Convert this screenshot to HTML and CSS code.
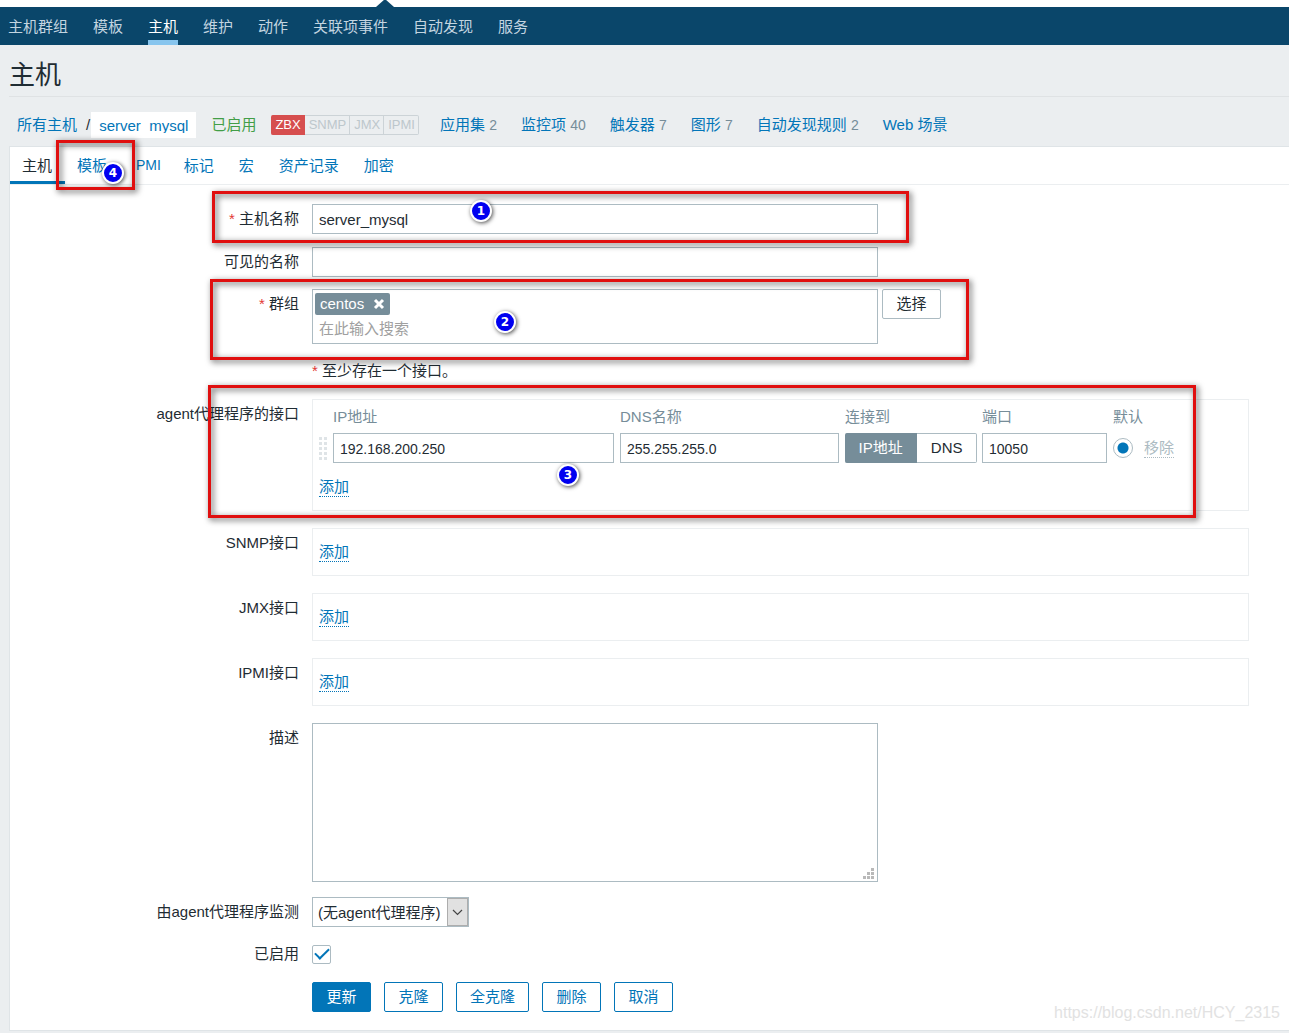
FILE: index.html
```html
<!DOCTYPE html>
<html lang="zh-CN">
<head>
<meta charset="utf-8">
<title>主机</title>
<link rel="stylesheet" href="styles.css">
</head>
<body>
<div class="topstrip"><span class="topstrip-arrow"></span></div>
<nav class="subnav">
  <a href="#">主机群组</a>
  <a href="#">模板</a>
  <a href="#" class="active">主机</a>
  <a href="#">维护</a>
  <a href="#">动作</a>
  <a href="#">关联项事件</a>
  <a href="#">自动发现</a>
  <a href="#">服务</a>
</nav>
<main class="content">
  <h1>主机</h1>
  <div class="crumbs">
    <a href="#" class="all-hosts">所有主机</a>
    <span class="slash">/</span>
    <a href="#" class="crumb-current"><span>server_mysql</span></a>
    <span class="enabled">已启用</span>
    <div class="availability"><span class="on">ZBX</span><span>SNMP</span><span>JMX</span><span>IPMI</span></div>
    <ul class="links">
      <li><a href="#">应用集</a> <span>2</span></li>
      <li><a href="#">监控项</a> <span>40</span></li>
      <li><a href="#">触发器</a> <span>7</span></li>
      <li><a href="#">图形</a> <span>7</span></li>
      <li><a href="#">自动发现规则</a> <span>2</span></li>
      <li><a href="#">Web 场景</a></li>
    </ul>
  </div>
  <section class="panel">
    <div class="tabs">
      <a href="#" class="active">主机</a>
      <a href="#">模板</a>
      <a href="#" class="latin">IPMI</a>
      <a href="#">标记</a>
      <a href="#">宏</a>
      <a href="#">资产记录</a>
      <a href="#">加密</a>
    </div>
    <form class="form">
      <div class="row">
        <label for="host" class="required">主机名称</label>
        <div><input id="host" class="text field" type="text" value="server_mysql"></div>
      </div>
      <div class="row">
        <label for="visible">可见的名称</label>
        <div><input id="visible" class="text field" type="text"></div>
      </div>
      <div class="row">
        <label for="groups" class="required">群组</label>
        <div class="group-line">
          <div class="multiselect field">
            <span class="chip">centos
              <button type="button" aria-label="移除 centos"><svg width="12" height="12" viewBox="0 0 12 12"><path d="M2 2l8 8M10 2l-8 8" stroke="#fff" stroke-width="3" fill="none"/></svg></button>
            </span>
            <input id="groups" type="text" placeholder="在此输入搜索">
          </div>
          <button type="button" class="btn grey">选择</button>
        </div>
      </div>
      <div class="row note">
        <span></span>
        <p class="required">至少存在一个接口。</p>
      </div>
      <div class="row iface">
        <span class="label">agent代理程序的接口</span>
        <div class="box agent">
          <table>
            <thead>
              <tr><th class="c-drag"></th><th class="c-ip">IP地址</th><th class="c-dns">DNS名称</th><th class="c-conn">连接到</th><th class="c-port">端口</th><th class="c-def">默认</th><th></th></tr>
            </thead>
            <tbody>
              <tr>
                <td><svg class="drag" width="8" height="24" viewBox="0 0 8 24" fill="#dfe4e7"><path d="M0 1h3v3H0zM5 1h3v3H5zM0 6h3v3H0zM5 6h3v3H5zM0 11h3v3H0zM5 11h3v3H5zM0 16h3v3H0zM5 16h3v3H5zM0 21h3v3H0zM5 21h3v3H5z"/></svg></td>
                <td><input class="text num" type="text" aria-label="IP地址" value="192.168.200.250"></td>
                <td><input class="text num" type="text" aria-label="DNS名称" value="255.255.255.0"></td>
                <td><div class="segmented"><button type="button" class="on">IP地址</button><button type="button">DNS</button></div></td>
                <td><input class="text num" type="text" aria-label="端口" value="10050"></td>
                <td><input class="radio" type="radio" aria-label="默认" checked></td>
                <td><button type="button" class="link disabled">移除</button></td>
              </tr>
            </tbody>
          </table>
          <button type="button" class="link">添加</button>
        </div>
      </div>
      <div class="row iface">
        <span class="label">SNMP接口</span>
        <div class="box"><button type="button" class="link">添加</button></div>
      </div>
      <div class="row iface">
        <span class="label">JMX接口</span>
        <div class="box"><button type="button" class="link">添加</button></div>
      </div>
      <div class="row iface">
        <span class="label">IPMI接口</span>
        <div class="box"><button type="button" class="link">添加</button></div>
      </div>
      <div class="row desc">
        <label for="desc">描述</label>
        <div class="textarea-wrap field">
          <textarea id="desc"></textarea>
          <svg class="grip" width="11" height="11" viewBox="0 0 11 11" fill="#b9b9b9"><path d="M8 0h3v3H8zM4 4h3v3H4zM8 4h3v3H8zM0 8h3v3H0zM4 8h3v3H4zM8 8h3v3H8z"/></svg>
        </div>
      </div>
      <div class="row">
        <label for="proxy">由agent代理程序监测</label>
        <div>
          <div class="select-wrap">
            <select id="proxy"><option>(无agent代理程序)</option></select>
            <span class="select-arrow"><svg width="11" height="7" viewBox="0 0 11 7"><path d="M1 1l4.500 4.500L10 1" fill="none" stroke="#444" stroke-width="1.200"/></svg></span>
          </div>
        </div>
      </div>
      <div class="row">
        <label for="enabled">已启用</label>
        <div class="check-line"><input id="enabled" class="check" type="checkbox" checked></div>
      </div>
      <div class="row">
        <span></span>
        <div class="actions">
          <button type="submit" class="btn primary">更新</button>
          <button type="button" class="btn">克隆</button>
          <button type="button" class="btn">全克隆</button>
          <button type="button" class="btn">删除</button>
          <button type="button" class="btn">取消</button>
        </div>
      </div>
    </form>
  </section>
</main>
<div class="frame frame-1"></div>
<div class="frame frame-2"></div>
<div class="frame frame-3"></div>
<div class="frame frame-4"></div>
<span class="pin pin-1">1</span>
<span class="pin pin-2">2</span>
<span class="pin pin-3">3</span>
<span class="pin pin-4">4</span>
<span class="watermark">https://blog.csdn.net/HCY_2315</span>
</body>
</html>
```
FILE: styles.css
```css
* { box-sizing: border-box; }

body {
  margin: 0;
  position: relative;
  background: #ebeef0;
  color: #1f2c33;
  font: 15px/20px "Liberation Sans", "Noto Sans CJK SC", sans-serif;
}

a { color: #0275b8; text-decoration: none; }
button, input, select, textarea { font: inherit; color: inherit; margin: 0; }
button { cursor: pointer; white-space: nowrap; }

/* navigation */
.topstrip { height: 7px; background: #fff; position: relative; }
.topstrip-arrow {
  position: absolute;
  left: 376px;
  bottom: 0;
  border: solid transparent;
  border-width: 0 9px 8px;
  border-bottom-color: #0a466a;
}
.subnav {
  display: flex;
  gap: 25px;
  height: 38px;
  padding-left: 8px;
  background: #0a466a;
}
.subnav a { line-height: 40px; height: 38px; color: #c3d5e0; white-space: nowrap; }
.subnav .active { color: #fff; box-shadow: inset 0 -5px #87c5ee; }

/* heading and breadcrumbs */
.content { padding-left: 9px; }
h1 {
  margin: 0;
  height: 52px;
  border-bottom: 1px solid #dfe2e4;
  font-size: 26px;
  font-weight: 400;
  line-height: 60px;
}
.crumbs {
  display: flex;
  align-items: center;
  height: 49px;
  padding: 7px 0 0 8px;
  white-space: nowrap;
}
.slash { margin: 0 1px 0 9px; }
.crumb-current {
  height: 26px;
  padding: 4px 8px 0;
  background: #fff;
}
.crumb-current span { display: block; height: 17px; line-height: 20px; overflow: hidden; }
.enabled { margin: 0 15px; color: #429e47; }
.availability { display: flex; font-size: 13px; line-height: 18px; color: #bdc7cc; }
.availability span { padding: 0 3px 0 4px; border: 1px solid #ccd3d7; border-left-width: 0; }
.availability .on { background: #d64e4e; border-color: #d64e4e; color: #fff; border-radius: 2px 0 0 2px; }
.availability span:last-child { border-radius: 0 2px 2px 0; }
.links { display: flex; gap: 24px; margin: 0; padding: 0 0 0 21px; list-style: none; }
.links span { font-size: 14px; color: #768d99; }

/* panel */
.panel { background: #fff; border: 1px solid #dfe4e7; border-right: 0; }
.tabs { display: flex; height: 38px; border-bottom: 1px solid #ebeef0; }
.tabs a { padding: 0 13px 0 12px; line-height: 37px; white-space: nowrap; }
.tabs .active { color: #1f2c33; box-shadow: inset 0 -3px #0275b8; }
.tabs .latin { padding-right: 11px; font-size: 14px; }

.form { padding: 19px 40px 18px 0; }
.row {
  display: grid;
  grid-template-columns: 289px minmax(0, 1fr);
  column-gap: 13px;
  margin-bottom: 12px;
}
.row:first-child { margin-bottom: 13px; }
.row:last-child { margin: 13px 0 0; }
.row > label, .label { line-height: 30px; text-align: right; }
.required::before { content: "* "; color: #e33734; }
.note { margin: 17px 0 18px; }
.note p { margin: 0; }
.iface { margin-bottom: 17px; }
.desc { margin-bottom: 15px; }

.field { width: 100%; max-width: 566px; }
.text {
  display: block;
  height: 30px;
  padding: 1px 6px 0;
  border: 1px solid #acbbc2;
  background: #fff;
}
.num { width: 100%; font-size: 14px; }

.group-line { display: flex; align-items: flex-start; gap: 4px; }
.multiselect { height: 55px; padding: 3px 2px; border: 1px solid #acbbc2; }
.chip {
  display: flex;
  align-items: center;
  justify-content: space-between;
  width: 75px;
  height: 22px;
  padding: 0 5px;
  border-radius: 2px;
  background: #768d99;
  color: #fff;
}
.chip button { display: flex; padding: 0; border: 0; background: none; }
.multiselect input { display: block; width: 100%; height: 26px; padding: 0 4px; border: 0; outline: 0; }
.multiselect input::placeholder { color: #a0a0a0; opacity: 1; }

.btn {
  min-width: 59px;
  height: 30px;
  padding: 0 13px;
  border: 1px solid #0275b8;
  border-radius: 2px;
  background: #fff;
  color: #0275b8;
  line-height: 28px;
}
.btn.primary { background: #0275b8; color: #fff; }
.btn.grey { border-color: #acbbc2; color: #1f2c33; }

/* interface boxes */
.box { min-height: 48px; padding: 13px 6px 0; border: 1px solid #ebeef0; }
.box.agent { min-height: 112px; padding-top: 7px; }
.link {
  display: block;
  height: 20px;
  padding: 0;
  border: 0;
  border-bottom: 1px dotted #0275b8;
  background: none;
  color: #0275b8;
  line-height: 18px;
}
.link.disabled { color: #acbbc2; border-color: #acbbc2; }
.agent > .link { margin-top: 14px; }
table { width: 100%; max-width: 870px; table-layout: fixed; border-collapse: collapse; }
th { height: 26px; padding: 0 0 6px; text-align: left; font-weight: 400; color: #768d99; }
td { height: 30px; padding: 0 6px 0 0; }
.c-drag { width: 14px; }
.c-ip { width: 287px; }
.c-dns { width: 225px; }
.c-conn { width: 137px; }
.c-port { width: 131px; }
.c-def { width: 31px; }
.drag { display: block; }
td:nth-child(4) { padding-right: 5px; }
.segmented { display: flex; height: 30px; }
.segmented button {
  flex: 1 1 auto;
  padding: 0 13px;
  border: 1px solid #acbbc2;
  border-left: 0;
  border-radius: 0 2px 2px 0;
  background: #fff;
}
.segmented .on {
  background: #768d99;
  border-color: #768d99;
  border-radius: 2px 0 0 2px;
  color: #fff;
}
.radio {
  display: block;
  appearance: none;
  width: 20px;
  height: 20px;
  border: 1px solid #acbbc2;
  border-radius: 50%;
  background: radial-gradient(circle, #0275b8 5px, #fff 6px);
}

/* lower controls */
.textarea-wrap { position: relative; height: 159px; }
textarea { display: block; width: 100%; height: 100%; border: 1px solid #acbbc2; resize: none; }
.grip { position: absolute; right: 4px; bottom: 3px; }
.select-wrap { position: relative; width: 157px; height: 30px; }
select {
  appearance: none;
  width: 100%;
  height: 100%;
  padding: 2px 5px 0;
  border: 1px solid #acbbc2;
  border-radius: 0;
  background: #fff;
}
.select-arrow {
  position: absolute;
  top: 1px;
  right: 1px;
  bottom: 1px;
  width: 21px;
  display: grid;
  place-items: center;
  border: 1px solid #adadad;
  background: #e1e1e1;
  pointer-events: none;
}
.check-line { display: flex; align-items: center; height: 30px; }
.check {
  appearance: none;
  display: grid;
  place-items: center;
  width: 19px;
  height: 19px;
  border: 1px solid #acbbc2;
  border-radius: 2px;
  background: #fff;
}
.check:checked::before {
  content: "";
  width: 12px;
  height: 6px;
  margin-bottom: 4px;
  border: solid #0275b8;
  border-width: 0 0 2px 2px;
  transform: rotate(-45deg);
}
.actions { display: flex; flex-wrap: wrap; gap: 13px; }

/* annotations over the page */
.frame {
  position: absolute;
  border: 3px solid #e00f0f;
  filter: drop-shadow(2px 2px 3px rgba(0, 0, 0, .7));
  pointer-events: none;
}
.frame-1 { left: 212px; top: 191px; width: 697px; height: 52px; }
.frame-2 { left: 210px; top: 279px; width: 759px; height: 81px; }
.frame-3 { left: 208px; top: 385px; width: 988px; height: 133px; }
.frame-4 { left: 56px; top: 140px; width: 79px; height: 50px; }
.pin {
  position: absolute;
  width: 22px;
  height: 22px;
  border: 2px solid #fff;
  border-radius: 50%;
  background: #0000f0;
  color: #fff;
  font: bold 12px/18px "DejaVu Sans", sans-serif;
  text-align: center;
  box-shadow: 1px 1px 4px rgba(0, 0, 0, .7);
}
.pin-1 { left: 470px; top: 200px; }
.pin-2 { left: 494px; top: 311px; }
.pin-3 { left: 557px; top: 464px; }
.pin-4 { left: 102px; top: 162px; }
.watermark {
  position: absolute;
  right: 9px;
  bottom: 8px;
  font-size: 16px;
  color: #e2e2e2;
}
```
